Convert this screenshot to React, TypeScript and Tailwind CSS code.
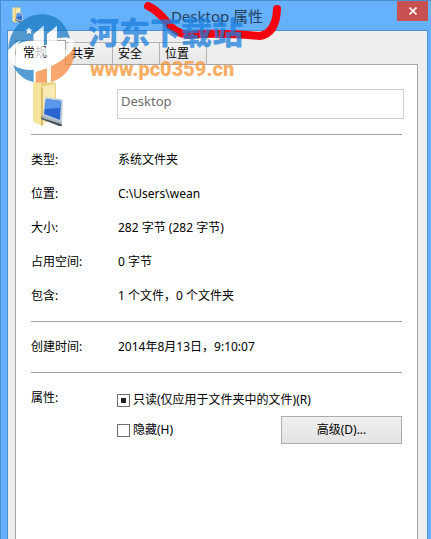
import { useEffect, useRef, useState } from "react";

const TABS = ["常规", "共享", "安全", "位置"];

const DETAILS = [
  { label: "类型:", value: "系统文件夹" },
  { label: "位置:", value: "C:\\Users\\wean" },
  { label: "大小:", value: "282 字节 (282 字节)" },
  { label: "占用空间:", value: "0 字节" },
  { label: "包含:", value: "1 个文件，0 个文件夹" },
];

function FolderIcon({ className }: { className: string }) {
  return (
    <svg viewBox="0 0 36 46" className={className} aria-hidden="true">
      <path d="M4 3 L22 1 Q25 1 25 4 V38 L5 40 Z" fill="#ecd27c" />
      <path d="M10 6 L24 3 V38 L12 43 Z" fill="#f8ebb4" />
      <path d="M5 1 L10 4 Q12 6 12 9 V45 L4 42 Q2 41 2 38 V3 Q2 1 5 1 Z" fill="#f5e39c" />
      <path d="M10 5 Q12 7 12 9 V45 L10 44 Z" fill="#dcbf68" />
      <path d="M14 16 L30 18 Q32 18 32 20 L31 42 L12 35 Z" fill="#c3d0da" />
      <path d="M15 18 L30 20 L29 39 L13 33 Z" fill="#2a66cf" />
      <path d="M15 18 L30 20 L29 27 L14 28 Z" fill="#5b97ea" />
      <path d="M11 35 L30 41 L31 45 L28 45 L10 38 Z" fill="#43525e" />
      <path d="M12 34 L31 41 L30 43 L11 37 Z" fill="#a9b7c1" />
    </svg>
  );
}

// ─── Site watermark ───────────────────────────────────────────────────────────

function Watermark() {
  return (
    <div className="pointer-events-none absolute left-1.5 top-3 flex select-none items-start">
      <svg viewBox="18 36 213 213" className="h-[71px] w-[71px] opacity-75" aria-hidden="true">
        {/* sky */}
        <path d="M22 146 C24 84 70 40 122 40 C166 40 198 68 209 120 C196 112 180 109 168 111 V74 L138 100 V132 H128 V74 L98 100 V118 C66 120 42 130 22 146 Z" fill="#1c7cc4" />
        <path d="M84 78 l3 7 8 1 -6 5 2 8 -7 -4 -7 4 2 -8 -6 -5 8 -1 Z" fill="#fff" />
        {/* lower left */}
        <path d="M34 186 C52 204 76 209 98 206 V243 C68 238 44 216 34 186 Z" fill="#1c7cc4" />
        {/* lower right */}
        <path d="M104 213 L138 202 V245 H104 Z" fill="#f58a3c" />
        <path d="M150 196 C184 180 208 158 220 134 C226 184 196 230 150 243 Z" fill="#f58a3c" />
        {/* towers */}
        <path d="M98 100 L128 74 V140 H138 V100 L168 74 V176 L138 190 V160 H128 V196 L98 202 Z" fill="#fff" />
        {/* orbit */}
        <path d="M60 118 C12 138 8 190 60 202 C130 216 214 168 220 132 C222 112 198 106 174 112 C196 114 208 122 202 136 C190 164 124 192 78 188 C34 182 34 142 60 118 Z" fill="#fff" />
      </svg>
      <div className="whitespace-nowrap pl-2.5 opacity-75">
        <p className="font-['Noto_Sans_CJK_SC',sans-serif] text-[31px] font-black leading-9 text-[#1c7fdc]">河东下载站</p>
        <p className="pl-0.5 font-[Roboto,sans-serif] text-[20px] font-black leading-10 text-[#f79433]">www.pc0359.cn</p>
      </div>
    </div>
  );
}

export default function App() {
  const [tab, setTab] = useState(TABS[0]);
  const [name, setName] = useState("Desktop");
  const readOnly = useRef<HTMLInputElement>(null);

  useEffect(() => {
    if (readOnly.current) readOnly.current.indeterminate = true;
  }, []);

  return (
    <div className="relative flex min-h-screen flex-col overflow-hidden border-l border-t border-[#4a8fce] bg-[#66b1fb] pr-[3px] pl-1.5 font-['Noto_Sans','Noto_Sans_CJK_SC',sans-serif] text-xs text-black">
      <header className="relative flex h-[29px] items-start">
        <FolderIcon className="ml-1 mt-1.5 h-4 w-3.5" />
        <h1 className="flex-1 pl-3 text-center text-[15px] leading-[30px] text-[#23405e]">Desktop 属性</h1>
        <button aria-label="关闭" className="flex h-5 w-[31px] items-center justify-center bg-[#c75050]">
          <svg viewBox="0 0 8 8" className="h-2 w-2" stroke="#fff" strokeWidth="1.6" aria-hidden="true">
            <path d="M0.5 0.5 L7.5 7.5 M7.5 0.5 L0.5 7.5" />
          </svg>
        </button>
      </header>

      <div className="flex flex-1 flex-col border-x border-t border-[#4b93d4] bg-[#eeeeee] pl-[7px] pr-[9px] pt-[9px]">
        <div role="tablist" className="flex h-6 items-end">
          {TABS.map((t) => (
            <button
              key={t}
              role="tab"
              aria-selected={t === tab}
              onClick={() => setTab(t)}
              className={
                t === tab
                  ? "relative -mb-px h-[25px] w-[51px] border border-b-0 border-[#a5a5a5] bg-white pl-[7px] text-left"
                  : "h-[22px] w-[47px] border border-b-0 border-l-0 border-[#b4b4b4] bg-linear-to-b from-[#f2f2f2] to-[#e7e7e7] pl-[5px] text-left"
              }
            >
              {t}
            </button>
          ))}
        </div>

        <main className="flex-1 border-x border-t border-[#a5a5a5] bg-white pl-[15px] pr-[13px] pt-4">
          <div className="flex h-[52px] items-start">
            <div className="w-[86px]">
              <FolderIcon className="h-[46px] w-9" />
            </div>
            <input
              aria-label="名称"
              value={name}
              onChange={(e) => setName(e.target.value)}
              className="mt-2 h-[30px] min-w-0 flex-1 border border-[#d0d0d0] bg-white px-[3px] pb-1.5 text-[13px] text-[#6d6d6d] outline-none"
            />
          </div>

          <dl className="mr-0.5 mt-px border-t border-[#a0a0a0] pb-2 pt-2">
            {DETAILS.map((d) => (
              <div key={d.label} className="flex h-[34px] items-center">
                <dt className="w-[87px]">{d.label}</dt>
                <dd>{d.value}</dd>
              </div>
            ))}
          </dl>

          <dl className="mr-0.5 flex h-[52px] items-center border-y border-[#a0a0a0]">
            <dt className="w-[87px]">创建时间:</dt>
            <dd>2014年8月13日，9:10:07</dd>
          </dl>

          <div role="group" aria-labelledby="attributes" className="mr-0.5 flex pt-[15px]">
            <span id="attributes" className="w-[86px] leading-5">属性:</span>
            <div className="flex flex-1 flex-col">
              <label className="flex h-6 items-center gap-[3px]">
                <input
                  ref={readOnly}
                  type="checkbox"
                  className="h-[13px] w-[13px] appearance-none border border-[#707070] bg-white bg-clip-content p-[3px] indeterminate:bg-[#212121] checked:bg-[#212121]"
                />
                只读(仅应用于文件夹中的文件)(R)
              </label>
              <div className="flex items-center justify-between pt-1">
                <label className="flex items-center gap-[3px]">
                  <input
                    type="checkbox"
                    className="h-[13px] w-[13px] appearance-none border border-[#707070] bg-white bg-clip-content p-[3px] checked:bg-[#212121]"
                  />
                  隐藏(H)
                </label>
                <button className="h-7 w-[121px] border border-[#acacac] bg-linear-to-b from-[#efefef] to-[#e4e4e4]">高级(D)...</button>
              </div>
            </div>
          </div>
        </main>
      </div>

      <svg viewBox="0 0 144 44" className="pointer-events-none absolute left-[143px] top-0 h-[44px] w-[144px]" fill="none" aria-hidden="true">
        <path d="M4 5 Q13 9 22 20 Q30 32 44 34 Q72 31 116 35 Q132 32 133 8" stroke="#f5000f" strokeWidth="8" strokeLinecap="round" strokeLinejoin="round" />
      </svg>
      <Watermark />
    </div>
  );
}
